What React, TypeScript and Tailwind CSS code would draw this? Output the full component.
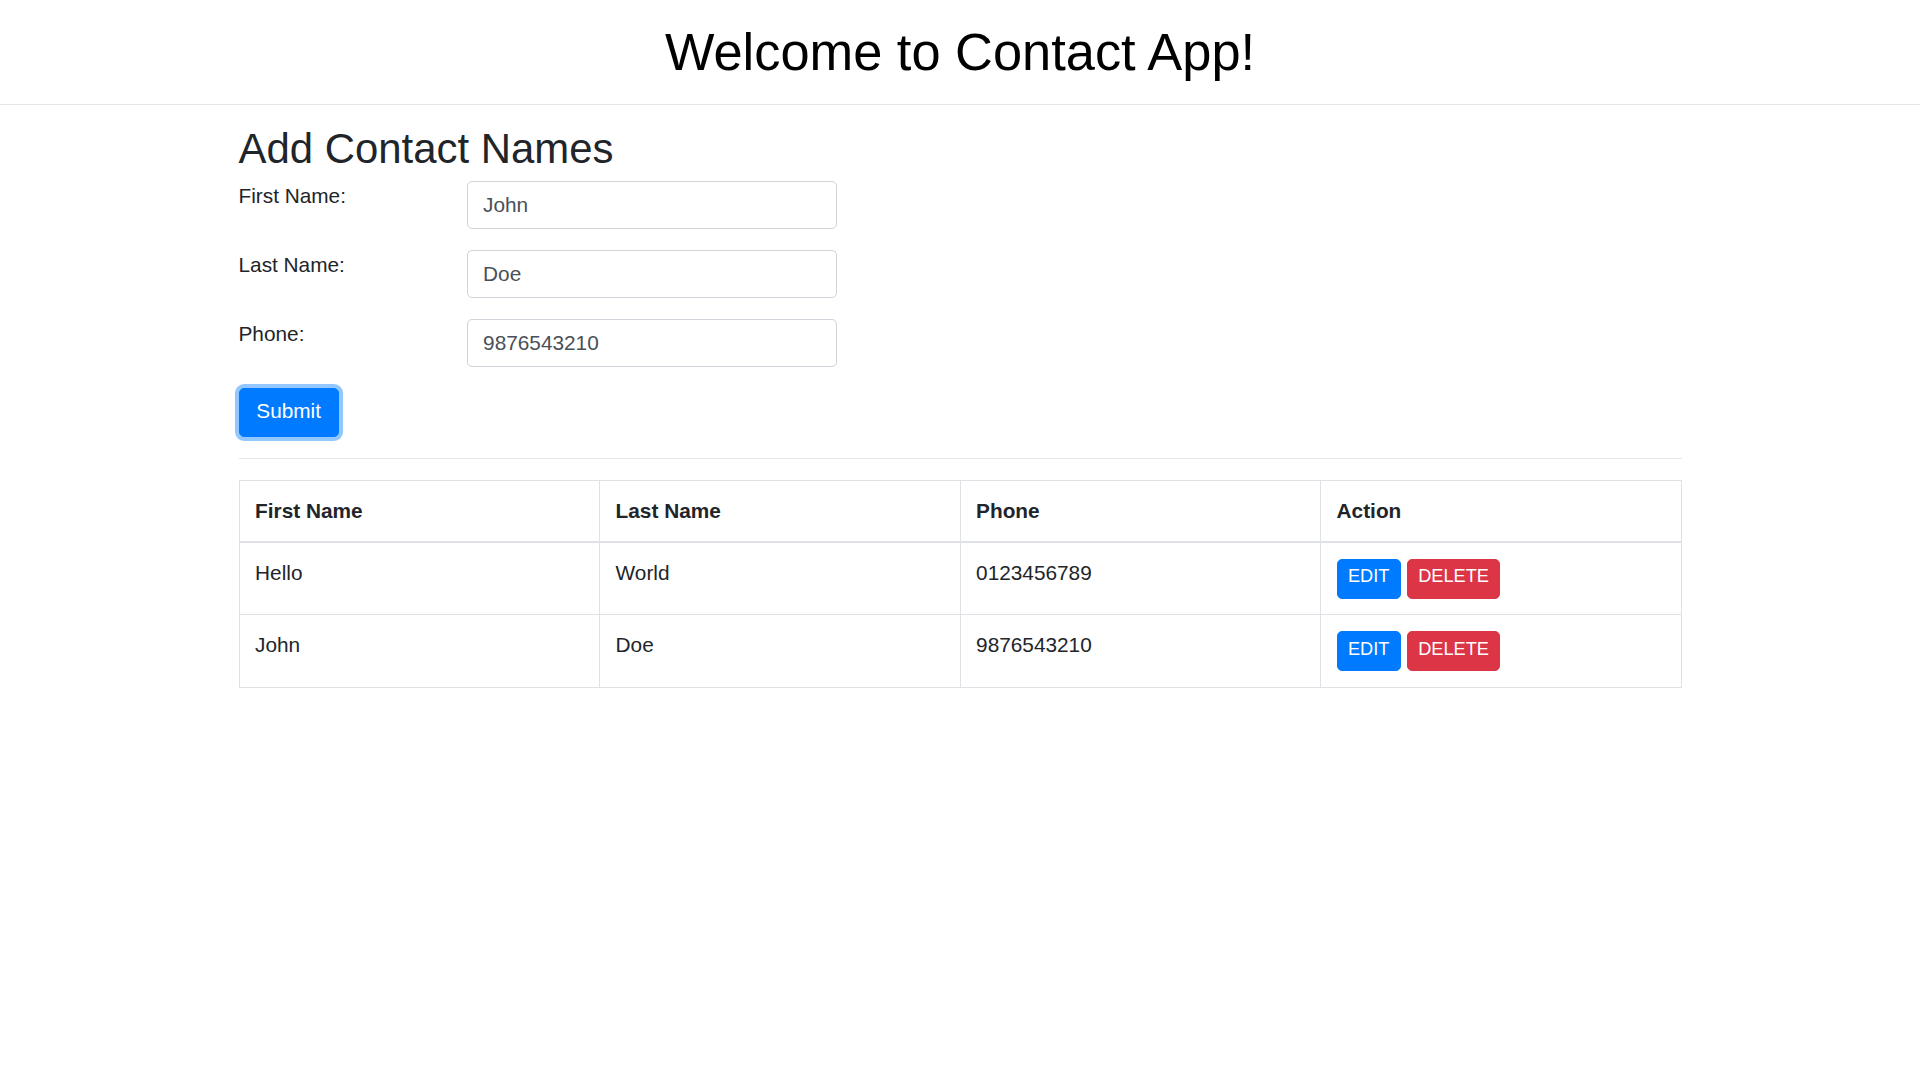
import React from 'react';

type Contact = { firstName: string; lastName: string; phone: string };

const contacts: Contact[] = [
  { firstName: 'Hello', lastName: 'World', phone: '0123456789' },
  { firstName: 'John', lastName: 'Doe', phone: '9876543210' },
];

const fields = [
  { id: 'firstName', label: 'First Name:', value: 'John' },
  { id: 'lastName', label: 'Last Name:', value: 'Doe' },
  { id: 'phone', label: 'Phone:', value: '9876543210' },
];

const cell = 'border border-[#dee2e6] px-[15.6px] text-left align-top';

export default function App() {
  return (
    <div className="min-h-screen bg-white font-['Liberation_Sans',Arial,sans-serif] text-[#212529]">
      <header className="border-b border-[#e5e5e5] pt-[21px] pb-[21px] text-center">
        <h1 className="text-[52.4px] leading-[62px] text-black">Welcome to Contact App!</h1>
      </header>

      <main className="mx-auto w-[1443px]">
        <h2 className="mt-[19px] mb-[7.2px] text-[41.9px] leading-[50px]">Add Contact Names</h2>

        <form onSubmit={(e) => e.preventDefault()}>
          {fields.map((f) => (
            <div key={f.id} className="mb-[21px] flex items-start">
              <label htmlFor={f.id} className="w-[228px] pt-[1.5px] text-[20.8px] leading-[26px]">
                {f.label}
              </label>
              <input
                id={f.id}
                defaultValue={f.value}
                className="h-[48px] w-[370px] rounded-[5px] border border-[#ced4da] bg-white px-[15.6px] text-[20.8px] text-[#495057] outline-none"
              />
            </div>
          ))}
          <button
            type="submit"
            className="rounded-[5px] border border-[#007bff] bg-[#007bff] px-[16.8px] pt-[8.6px] pb-[12.4px] text-[20.8px] leading-[26px] text-white shadow-[0_0_0_4px_rgba(38,143,255,0.5)]"
          >
            Submit
          </button>
        </form>

        <hr className="my-[21px] border-t border-[#e6e6e6]" />

        <table className="w-full table-fixed border-collapse border border-[#dee2e6] text-[20.8px] leading-[31.2px]">
          <thead>
            <tr>
              {['First Name', 'Last Name', 'Phone', 'Action'].map((h) => (
                <th key={h} className={`${cell} border-b-2 pt-[14px] pb-[14.5px] font-bold`}>
                  {h}
                </th>
              ))}
            </tr>
          </thead>
          <tbody>
            {contacts.map((c, i) => (
              <tr key={i}>
                <td className={`${cell} pt-[14px]`}>{c.firstName}</td>
                <td className={`${cell} pt-[14px]`}>{c.lastName}</td>
                <td className={`${cell} pt-[14px]`}>{c.phone}</td>
                <td className={`${cell} py-[15.8px]`}>
                  <div className="flex gap-[6px]">
                    <button className="rounded-[5px] border border-[#007bff] bg-[#007bff] px-[10.4px] pt-[5.7px] pb-[10.3px] text-[18.2px] leading-[22px] text-white">
                      EDIT
                    </button>
                    <button className="rounded-[5px] border border-[#dc3545] bg-[#dc3545] px-[10.4px] pt-[5.7px] pb-[10.3px] text-[18.2px] leading-[22px] text-white">
                      DELETE
                    </button>
                  </div>
                </td>
              </tr>
            ))}
          </tbody>
        </table>
      </main>
    </div>
  );
}
